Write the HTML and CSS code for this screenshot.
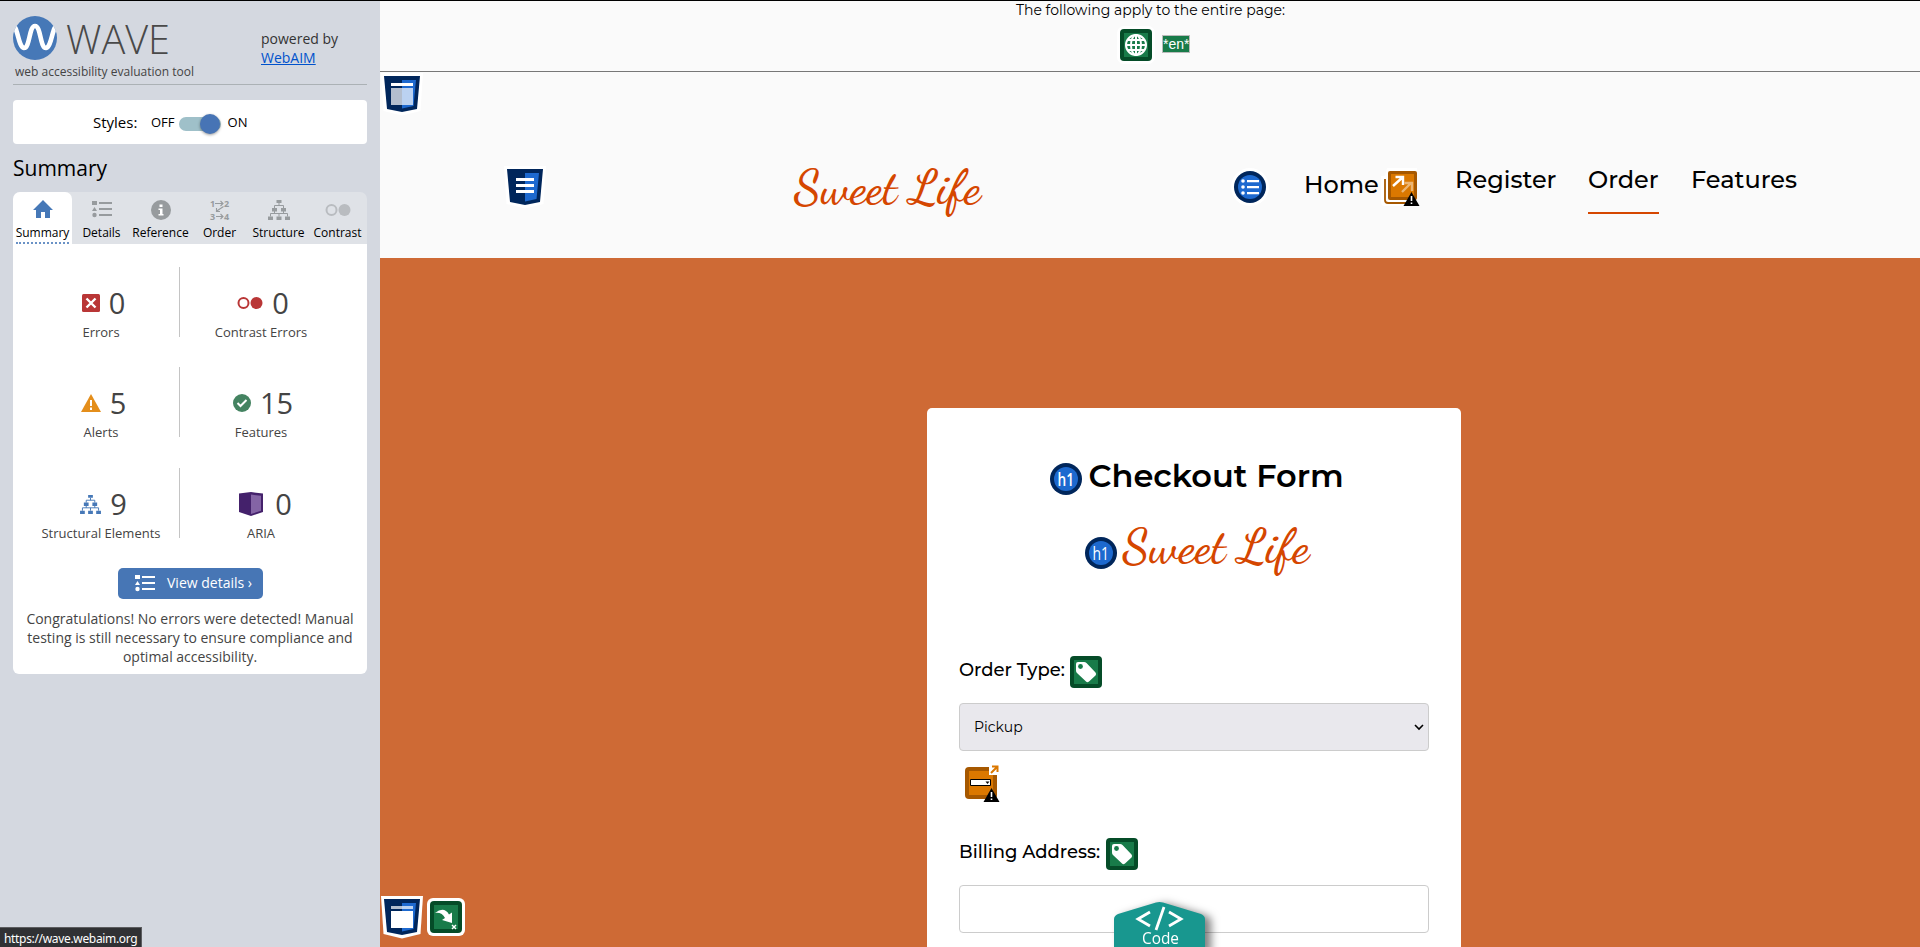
FILE: index.html
```html
<!DOCTYPE html>
<html lang="en">
<head>
<meta charset="utf-8">
<title>Checkout Form</title>
<link rel="stylesheet" href="styles.css">
</head>
<body>
<svg class="defs" width="0" height="0">
  <symbol id="list" viewBox="0 0 20 18"><path d="M0 1h5v4H0zM0 11l2.500-4L5 11zM7 2h13v2H7zM7 8h13v2H7zM7 14h13v2H7z"/><circle cx="2.500" cy="15" r="2.200"/></symbol>
  <symbol id="tree" viewBox="0 0 22 20"><path d="M8.500 0h5v3h-5zM4 8h5v3.500H4zM13 8h5v3.500h-5zM0 16.500h5V20H0zM8.500 16.500h5V20h-5zM17 16.500h5V20h-5z"/><path d="M11 3v2.500M6.500 8V5.500h9V8M2.500 16.500v-3h17v3M11 16.500v-3M6.500 11v2.500M15.500 11v2.500" fill="none" stroke="currentColor"/></symbol>
  <symbol id="tag" viewBox="0 0 32 32"><rect width="32" height="32" rx="4" fill="#054c28"/><path d="M4 4h24v24H4z" fill="#187b49"/><path d="M6 8q0-2 2-2h6q1.500 0 2.500 1l9 9.500q1.300 1.500 0 3L19 25.500q-1.700 1.300-3 0L7 17q-1-1-1-2.500z" fill="#fff"/><circle cx="10.500" cy="10.500" r="2.400" fill="#187b49"/></symbol>
  <symbol id="h1" viewBox="0 0 32 32"><circle cx="16" cy="16" r="16" fill="#00265b"/><circle cx="16" cy="16" r="12" fill="#1d69cf"/><text x="7.500" y="22.500" textLength="16.500" lengthAdjust="spacingAndGlyphs" font-family="Open Sans" font-size="18" fill="#fff">h1</text></symbol>
  <symbol id="warn" viewBox="0 0 16 14"><path d="M8 0l8 14H0z" fill="#000"/><path d="M8 4v5M8 10.500v1.500" stroke="#fff" stroke-width="1.600"/></symbol>
</svg>

<aside class="sidebar">
  <header class="brand">
    <svg class="brand-logo" width="190" height="70" viewBox="0 0 190 70">
      <defs><clipPath id="disc"><circle cx="22" cy="25" r="22"/></clipPath></defs>
      <circle cx="22" cy="25" r="22" fill="#4678b7"/>
      <path clip-path="url(#disc)" d="M-1 12C5 12 5 34 11 35C17 35 16 13 22 13C28 13 27 35 33 35C39 34 39 12 45 12" fill="none" stroke="#fff" stroke-width="4.600"/>
      <text x="53" y="41" textLength="104" lengthAdjust="spacingAndGlyphs" class="brand-name">WAVE</text>
      <text x="2" y="63" textLength="179" lengthAdjust="spacingAndGlyphs" class="tagline">web accessibility evaluation tool</text>
    </svg>
    <p class="powered">powered by<br><a href="#">WebAIM</a></p>
  </header>

  <div class="styles-box"><span class="styles-label">Styles:</span><span>OFF</span><span class="switch"><i></i></span><span>ON</span></div>

  <h2>Summary</h2>
  <nav class="tabs">
    <a class="tab active"><svg width="20" height="18" viewBox="0 0 20 18"><path d="M10 0L20 10h-3v8h-5v-6H8v6H3v-8H0L10 0z"/></svg><span>Summary</span></a>
    <a class="tab"><svg width="20" height="18"><use href="#list"/></svg><span>Details</span></a>
    <a class="tab"><svg width="20" height="20" viewBox="0 0 20 20"><circle cx="10" cy="10" r="10"/><path d="M8.500 4.500h3v2.500h-3zM7.500 8.500h4V14h1v1.500h-5V14H9v-4H7.500z" fill="#fff"/></svg><span>Reference</span></a>
    <a class="tab"><svg width="20" height="20" viewBox="0 0 20 20"><g font-family="Open Sans" font-weight="700" font-size="9"><text x="0" y="6.500">1</text><text x="14" y="6.500">2</text><text x="0" y="19.500">3</text><text x="14" y="19.500">4</text></g><path d="M5 3.500h8M10.500 1L13 3.500L10.500 6M13.500 6.500L6 11.500M6.500 8v3.500H10M6 16.500h7M10.500 14l2.500 2.500L10.500 19" fill="none" stroke="currentColor" stroke-width="1.100"/></svg><span>Order</span></a>
    <a class="tab"><svg width="22" height="20"><use href="#tree"/></svg><span>Structure</span></a>
    <a class="tab"><svg width="26" height="20" viewBox="0 0 26 20"><circle cx="6.500" cy="10" r="5" fill="none" stroke="#b9bcc0" stroke-width="2"/><circle cx="19.500" cy="10" r="6" fill="#b9bcc0"/></svg><span>Contrast</span></a>
  </nav>

  <section class="panel">
    <div class="stats">
      <div class="stat"><div class="count"><svg width="18" height="18" viewBox="0 0 18 18"><rect width="18" height="18" rx="1.500" fill="#b93636"/><path d="M4.500 4.500l9 9M13.500 4.500l-9 9" stroke="#fff" stroke-width="2.400"/></svg><b>0</b></div><span>Errors</span></div>
      <div class="stat"><div class="count"><svg width="26" height="18" viewBox="0 0 26 18"><circle cx="6.500" cy="9" r="5" fill="none" stroke="#b93636" stroke-width="2"/><circle cx="19.500" cy="9" r="6" fill="#b93636"/></svg><b>0</b></div><span>Contrast Errors</span></div>
      <div class="stat"><div class="count"><svg width="20" height="18" viewBox="0 0 20 18"><path d="M10 0l10 18H0z" fill="#e48e1b"/><path d="M10 6v6M10 13.500V16" stroke="#fff" stroke-width="2"/></svg><b>5</b></div><span>Alerts</span></div>
      <div class="stat"><div class="count"><svg width="18" height="18" viewBox="0 0 18 18"><circle cx="9" cy="9" r="9" fill="#448361"/><path d="M4.500 9l3 3 6-6" fill="none" stroke="#fff" stroke-width="2"/></svg><b>15</b></div><span>Features</span></div>
      <div class="stat"><div class="count"><svg class="blue" width="21" height="19"><use href="#tree"/></svg><b>9</b></div><span>Structural Elements</span></div>
      <div class="stat"><div class="count aria"><svg width="24" height="24" viewBox="0 0 24 24"><path d="M0 1.500L12 0l12 1.500V20l-12 4L0 20z" fill="#44216b"/><path d="M12 2.500l10 1.300v15L12 22z" fill="#8464a5"/></svg><b>0</b></div><span>ARIA</span></div>
    </div>
    <button class="details"><svg width="20" height="18"><use href="#list"/></svg><span>View details ›</span></button>
    <p class="message">Congratulations! No errors were detected! Manual<br>testing is still necessary to ensure compliance and<br>optimal accessibility.</p>
  </section>
</aside>
<div class="status">https://wave.webaim.org</div>

<main class="page">
  <div class="page-info">
    <p>The following apply to the entire page:</p>
    <div class="page-icons">
      <svg class="halo" width="32" height="32" viewBox="0 0 32 32"><rect width="32" height="32" rx="4" fill="#054c28"/><path d="M4 4h24v24H4z" fill="#187b49"/><g fill="none" stroke="#fff" stroke-width="2"><circle cx="16" cy="16" r="10"/><ellipse cx="16" cy="16" rx="5" ry="10"/><path d="M16 6v20M6 16h20M7.500 11h17M7.500 21h17"/></g></svg>
      <span class="lang">*en*</span>
    </div>
  </div>

  <header class="site-header">
    <svg class="header-mark" width="42" height="42" viewBox="-3 -3 42 42"><path d="M-3-3h42L36.500 35 18 39.500-.5 35z" fill="#fff"/><path d="M0 0h36l-3 33-15 3-15-3z" fill="#00265b"/><path d="M18 4h14l-2.500 26L18 32.500z" fill="#1d69cf"/><path d="M7 7h22v3H7z" fill="#fff"/><path d="M7 12h22v17H7z" fill="#fff" opacity=".7"/></svg>
    <div class="bar">
      <svg width="42" height="42" viewBox="-3 -3 42 42"><path d="M-3-3h42L36.500 35 18 39.500-.5 35z" fill="#fff"/><path d="M0 0h36l-3 33-15 3-15-3z" fill="#00265b"/><path d="M18 4h14l-2.500 26L18 32.500z" fill="#1d69cf"/><path d="M9 9h18v3H9zM9 15h18v3H9zM9 21h18v3H9z" fill="#fff"/></svg>
      <svg class="script-logo" width="190" height="60" viewBox="0 0 190 60"><text x="1" y="37">Sweet Life</text></svg>
      <nav class="links">
        <svg class="list-icon" width="32" height="32" viewBox="0 0 32 32"><circle cx="16" cy="16" r="16" fill="#00265b"/><circle cx="16" cy="16" r="12" fill="#1d69cf"/><path d="M13 9h12v2.200H13zM13 15h12v2.200H13zM13 21h12v2.200H13z" fill="#fff"/><g fill="#fff"><circle cx="9" cy="10" r="1.800"/><circle cx="9" cy="16" r="1.800"/><circle cx="9" cy="22" r="1.800"/></g></svg>
        <a class="home"><span>Home</span><svg width="40" height="40" viewBox="-3 -3 40 40"><path d="M3-3h30v38H1q-4 0-4-4V5h4z" fill="#fff"/><path d="M1 8v21q0 3 3 3h20" fill="none" stroke="#a65800" stroke-width="1.800"/><rect x="4" width="29" height="29" rx="2" fill="#a65800"/><path d="M7 3h23v23H7z" fill="#db7800"/><path d="M9 15L19 6M11.500 6H19v8" fill="none" stroke="#fff" stroke-width="2.400"/><path d="M18 21l9-9M20.500 12H28v8" fill="none" stroke="#fff" stroke-width="2.400" opacity=".45"/><use href="#warn" x="19" y="21" width="17" height="14"/></svg></a>
        <a class="register">Register</a>
        <a class="current">Order</a>
        <a class="features">Features</a>
      </nav>
    </div>
  </header>

  <section class="checkout">
    <form class="card">
      <h1><svg width="32" height="32"><use href="#h1"/></svg><span>Checkout Form</span></h1>
      <div class="card-logo"><svg width="32" height="32"><use href="#h1"/></svg><svg class="script-logo" width="190" height="60" viewBox="0 0 190 60"><text x="0.500" y="43.500">Sweet Life</text></svg></div>
      <label><span>Order Type:</span><svg width="32" height="32"><use href="#tag"/></svg></label>
      <div class="field select"><span>Pickup</span><svg width="10" height="6" viewBox="0 0 10 6"><path d="M1 1l4 4 4-4" fill="none" stroke="#000" stroke-width="1.600"/></svg></div>
      <svg class="jump" width="36" height="38" viewBox="0 -2 36 38"><rect width="32" height="32" rx="4" fill="#a65800"/><path d="M4 4h24v24H4z" fill="#db7800"/><path d="M24-2h12V8H24z" fill="#fff"/><path d="M26 6l6-6M27 -.5h5.500V5" fill="none" stroke="#db7800" stroke-width="2"/><path d="M5.500 12.500h20v6h-20z" fill="#fff" stroke="#000"/><path d="M20.500 14.500h4l-2 2.500z"/><use href="#warn" x="18" y="21" width="17" height="14"/></svg>
      <label class="billing"><span>Billing Address:</span><svg width="32" height="32"><use href="#tag"/></svg></label>
      <div class="field"></div>
    </form>
  </section>
</main>

<div class="float-marks">
  <svg width="42" height="42" viewBox="-3 -3 42 42"><path d="M-3-3h42L36.500 35 18 39.500-.5 35z" fill="#fff"/><path d="M0 0h36l-3 33-15 3-15-3z" fill="#00265b"/><path d="M18 4h14l-2.500 26L18 32.500z" fill="#1d69cf"/><path d="M7 7h22v3H7z" fill="#fff" opacity=".7"/><path d="M7 12h22v17H7z" fill="#fff"/></svg>
  <svg width="38" height="38" viewBox="-3 -3 38 38"><rect x="-3" y="-3" width="38" height="38" rx="6" fill="#fff"/><rect width="32" height="32" rx="4" fill="#054c28"/><path d="M4 4h24v24H4z" fill="#187b49"/><path d="M5 12q9-7 14 1.500L22 11.500V22L12 19l3-2q-3-6-10-5z" fill="#fff"/><path d="M22 24l4 4M26 24l-4 4" stroke="#fff" stroke-width="1.400"/></svg>
</div>
<svg class="code-tab" width="92" height="45" viewBox="0 0 92 45"><path d="M0 17q0-3 4-5L42 .5q3.500-1 7 0L87 12q4 2 4 5v33H0z" fill="#18978f"/><path d="M36 10L24 17l12 7M55 10l12 7-12 7M50 5l-8 23" fill="none" stroke="#fff" stroke-width="2.800"/><text x="28" y="42" textLength="37" lengthAdjust="spacingAndGlyphs">Code</text></svg>
</body>
</html>
```
FILE: styles.css
```css
* { box-sizing: border-box; }
html, body { height: 100%; }
body { margin: 0; display: flex; overflow: hidden; border-top: 1px solid #000; font-family: "Open Sans", sans-serif; color: #000; background: #ce6a35; }
svg { display: block; flex: none; overflow: visible; }
p, h1, h2 { margin: 0; font-weight: 400; }
.defs { position: absolute; }

.sidebar { width: 380px; flex: none; height: 946px; padding: 12px 13px; background: #d4d8e0; }
.brand { display: flex; height: 72px; border-bottom: 1px solid #abb1b5; }
.brand-name { font: 300 40px "Open Sans"; fill: #494949; }
.tagline { font: 12.500px "Open Sans"; fill: #444; }
.powered { margin: 16px 0 0 58px; font-size: 14px; line-height: 19px; color: #333; }
.powered a { color: #0052cc; text-decoration: underline; }
.styles-box { display: flex; align-items: center; height: 44px; margin-top: 15px; padding-left: 80px; background: #fff; border-radius: 4px; font-size: 13px; }
.styles-label { font-size: 15px; width: 58px; }
.switch { width: 42px; height: 14px; margin: 3px 7px 0 4px; padding-left: 21px; border-radius: 7px; background: #9fc0c9; }
.switch i { display: block; width: 20px; height: 20px; margin-top: -3px; border-radius: 50%; background: #4774b5; box-shadow: 0 1px 3px rgba(0,0,0,.4); }
h2 { margin-top: 10px; height: 38px; font-size: 21px; line-height: 28px; }
.tabs { display: flex; height: 52px; border-radius: 7px 7px 0 0; background: #dfe2e7; color: #979b9e; fill: currentColor; }
.tab { width: 59px; display: flex; flex-direction: column; align-items: center; padding-top: 8px; font-size: 12px; }
.tab span { margin-top: auto; height: 20px; line-height: 18px; color: #000; white-space: nowrap; }
.tab.active { background: #fff; color: #4678b7; border-radius: 7px 7px 0 0; }
.tab.active span { border-bottom: 2px dotted #6a92c6; }
.panel { height: 430px; background: #fff; border-radius: 0 0 6px 6px; color: #444; }
.stats { display: grid; grid-template-columns: 167px 167px; grid-template-rows: 100px 101px 100.500px; padding-top: 23px; }
.stat { height: 70px; text-align: center; font-size: 13px; line-height: 18px; }
.stat:nth-child(odd) { border-right: 1px solid #c4c4c4; padding: 13px 0 0 10px; }
.stat:nth-child(even) { padding: 13px 12px 0 7px; }
.stat > span { display: block; margin-top: -3px; }
.count { display: flex; align-items: center; justify-content: center; gap: 9px; height: 46px; }
.stat:nth-child(odd) .count { padding-left: 5px; }
.stat:nth-child(even) .count { padding-left: 4px; }
.stat:nth-child(even) .count.aria { gap: 12px; padding-left: 9px; }
.count b { font-size: 29px; font-weight: 400; }
.blue { color: #4678b7; fill: #4678b7; }
.details { display: flex; align-items: center; gap: 12px; width: 145px; height: 31px; margin: -1px 0 0 105px; padding: 0 0 1px 17px; border: 0; border-radius: 5px; background: #4776b5; color: #fff; fill: #fff; font: 14px "Open Sans"; }
.message { margin-top: 10px; text-align: center; font-size: 14px; line-height: 19px; }
.status { position: absolute; left: 0; bottom: 0; width: 142px; height: 20px; padding-left: 4px; background: #303134; border: solid #5c5d60; border-width: 1px 1px 0 0; color: #fff; font: 12px/22px "Noto Sans", sans-serif; letter-spacing: -.33px; white-space: nowrap; }

.page { flex: 1; min-width: 0; font-family: "Montserrat", "Inter", sans-serif; }
.page-info { height: 71px; background: #fafafa; border-bottom: 1px solid #777; }
.page-info p { padding-left: 636px; font-size: 14px; line-height: 18px; }
.page-icons { display: flex; align-items: center; gap: 10px; padding: 10px 0 0 740px; }
.halo { border-radius: 4px; box-shadow: 0 0 0 3px #fff; }
.lang { width: 28px; height: 18px; margin-top: -2px; border: 1px solid #bbb; background: #187b49; color: #fff; font: 14px/16px "Liberation Sans"; text-align: center; }
.site-header { height: 186px; padding-top: 1px; background: #fafafa; }
.header-mark { margin-left: 1px; }
.bar { display: flex; padding: 51px 0 0 124px; }
.bar .script-logo { margin-left: 247px; }
.script-logo text { font: 600 48px "Dancing Script", "Lato", cursive; fill: #d54600; }
.links { display: flex; margin: -1px 0 0 251px; font-size: 24px; line-height: 30px; font-weight: 500; }
.list-icon { margin-top: 6px; border-radius: 50%; box-shadow: 0 0 0 3px #fff; }
.links .home { display: flex; width: 117px; margin-left: 38px; justify-content: space-between; }
.home span { margin-top: 5px; }
.home svg { margin-top: 3px; }
.register { width: 101px; margin-left: 34px; }
.current { width: 71px; height: 49px; margin-left: 32px; border-bottom: 2px solid #d54600; }
.features { margin-left: 32px; }
.checkout { padding: 150px 0 0 547px; }
.card { width: 534px; height: 539px; padding: 55px 32px 0; background: #fff; border-radius: 5px 5px 0 0; }
h1 { display: flex; gap: 6.500px; margin-left: 91px; height: 55px; font-size: 32px; line-height: 26px; font-weight: 600; }
.card-logo { display: flex; gap: 5px; margin-left: 126px; height: 138px; }
.card-logo > svg:first-child { margin-top: 19px; }
label { display: flex; gap: 5px; height: 47px; font-size: 18px; line-height: 28px; font-weight: 500; }
.billing { gap: 6px; }
.field { width: 470px; height: 48px; border: 1px solid #ccc; border-radius: 4px; }
.select { display: flex; align-items: center; justify-content: space-between; padding: 0 4px 0 14px; background: #e9e8ed; font-size: 14px; }
.jump { margin: 14px 0 35px 6px; }
.float-marks { position: absolute; left: 381px; bottom: 9px; display: flex; align-items: center; gap: 4px; }
.code-tab { position: absolute; left: 1114px; top: 902px; filter: drop-shadow(6px 2px 4px rgba(0,0,0,.5)); }
.code-tab text { font: 16px "Open Sans"; fill: #fff; }
```
